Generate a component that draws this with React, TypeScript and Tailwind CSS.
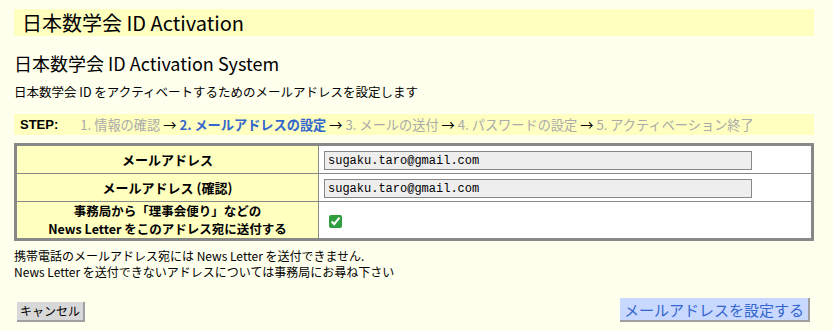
import { useState } from 'react';

const jp = "font-['Noto_Sans_CJK_JP','Liberation_Sans',sans-serif]";

export default function App() {
  const [email, setEmail] = useState('sugaku.taro@gmail.com');
  const [confirm, setConfirm] = useState('sugaku.taro@gmail.com');
  const [subscribe, setSubscribe] = useState(true);

  return (
    <div className={`min-h-[331px] w-full bg-[#ffffee] text-black ${jp}`}>
      <div className="w-[800px] ml-[14px] pt-[9px]">
        <div className="h-[27px] bg-[#ffffc0] pl-[8px] flex items-center text-[20px] leading-none">
          日本数学会 ID Activation
        </div>

        <div className="mt-[16px] text-[18px] leading-[22px]">日本数学会 ID Activation System</div>

        <div className="mt-[10px] text-[12.5px] leading-[16px]">
          日本数学会 ID をアクティベートするためのメールアドレスを設定します
        </div>

        <div className="mt-[14px] h-[21px] bg-[#ffffc0] pl-[6px] flex items-center text-[13.2px] leading-none text-[#aaaaaa] whitespace-nowrap">
          <span className="font-bold text-black font-['Liberation_Sans',sans-serif] text-[13px]">STEP:</span>
          <span className="ml-[22px]">1. 情報の確認</span>
          <span className="text-black mx-[3px]">→</span>
          <span className="font-bold text-[#3366cc]">2. メールアドレスの設定</span>
          <span className="text-black mx-[3px]">→</span>
          <span>3. メールの送付</span>
          <span className="text-black mx-[3px]">→</span>
          <span>4. パスワードの設定</span>
          <span className="text-black mx-[3px]">→</span>
          <span>5. アクティベーション終了</span>
        </div>

        <table className="mt-[8px] w-[800px] border-[3px] border-[#888888] border-collapse bg-white">
          <tbody className="text-[13px]">
            <tr className="h-[29px] border-b border-[#888888]">
              <th className="w-[303px] bg-[#ffffc0] border-r border-[#888888] font-bold">メールアドレス</th>
              <td className="pl-[5px]">
                <input
                  value={email}
                  onChange={(e) => setEmail(e.target.value)}
                  className="w-[428px] h-[19px] bg-[#eeeeee] border border-[#888888] px-[3px] text-[12px] font-['Liberation_Mono',monospace] outline-none"
                />
              </td>
            </tr>
            <tr className="h-[28px] border-b border-[#888888]">
              <th className="bg-[#ffffc0] border-r border-[#888888] font-bold">メールアドレス (確認)</th>
              <td className="pl-[5px]">
                <input
                  value={confirm}
                  onChange={(e) => setConfirm(e.target.value)}
                  className="w-[428px] h-[19px] bg-[#eeeeee] border border-[#888888] px-[3px] text-[12px] font-['Liberation_Mono',monospace] outline-none"
                />
              </td>
            </tr>
            <tr className="h-[37px]">
              <th className="bg-[#ffffc0] border-r border-[#888888] font-bold text-[12.5px] leading-[18px] p-0">
                <div>事務局から「理事会便り」などの</div>
                <div>News Letter をこのアドレス宛に送付する</div>
              </th>
              <td className="pl-[10px]">
                <input
                  type="checkbox"
                  checked={subscribe}
                  onChange={(e) => setSubscribe(e.target.checked)}
                  className="w-[13px] h-[13px] accent-[#2e9e3e] align-middle"
                />
              </td>
            </tr>
          </tbody>
        </table>

        <div className="mt-[7px] text-[12px] leading-[16px]">
          <div>携帯電話のメールアドレス宛には News Letter を送付できません.</div>
          <div>News Letter を送付できないアドレスについては事務局にお尋ね下さい</div>
        </div>

        <div className="mt-[18px] flex items-end justify-between">
          <button
            type="button"
            className="ml-[3px] h-[20px] px-[3px] bg-[#d8d8d8] border-r-2 border-b-2 border-[#a0a0a0] text-[12px] leading-none"
          >
            キャンセル
          </button>
          <button
            type="button"
            className="mr-[4px] h-[24px] px-[4px] bg-[#c8d8ff] border-r-2 border-b-2 border-[#a0a0a0] text-[15px] leading-none text-[#3366cc]"
          >
            メールアドレスを設定する
          </button>
        </div>
      </div>
    </div>
  );
}
